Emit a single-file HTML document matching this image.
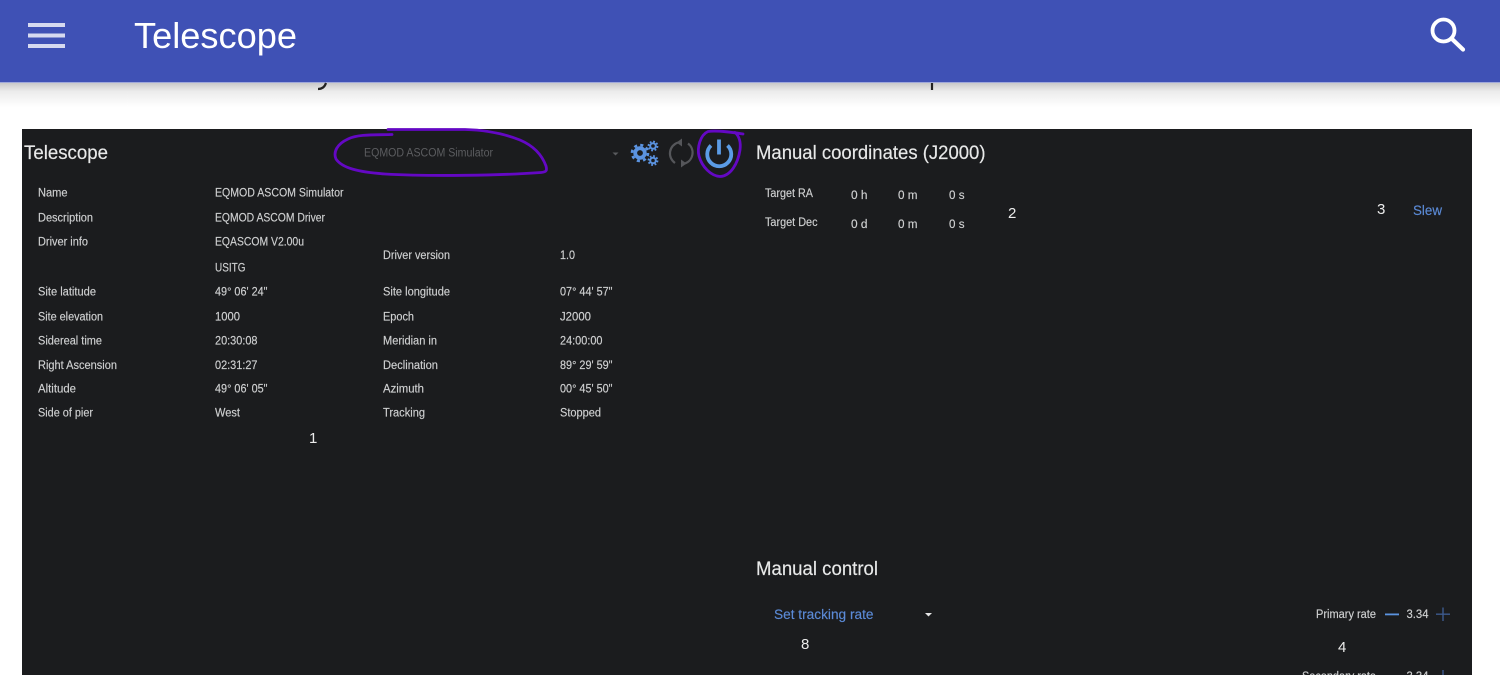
<!DOCTYPE html>
<html lang="en">
<head>
<meta charset="utf-8">
<title>Telescope</title>
<style>
html,body{margin:0;padding:0;background:#fff;width:1500px;height:675px;overflow:hidden}
svg{display:block;position:absolute;left:0;top:0;filter:blur(.35px)}
text{font-family:"Liberation Sans",sans-serif}
.s{font-size:11.5px;fill:#cfd0d1;stroke:#cfd0d1;stroke-width:.15px}
.h{font-size:19px;fill:#e8e9e9;stroke:#e8e9e9;stroke-width:.15px}
.n{font-size:15px;fill:#ececec}
.b{fill:#5b8ad6;stroke:#5b8ad6;stroke-width:.15px}
</style>
</head>
<body>
<svg width="1500" height="675" viewBox="0 0 1500 675" xmlns="http://www.w3.org/2000/svg">
<defs>
<linearGradient id="sh" x1="0" y1="0" x2="0" y2="1">
<stop offset="0" stop-color="#c9c9c9"/>
<stop offset=".35" stop-color="#ececec"/>
<stop offset="1" stop-color="#ffffff"/>
</linearGradient>
</defs>
<rect width="1500" height="675" fill="#fff"/>
<rect x="0" y="83" width="1500" height="24" fill="url(#sh)"/>
<path d="M326 83C325 86 323 89 318 89" fill="none" stroke="#222" stroke-width="2.200"/>
<path d="M932 83V90" fill="none" stroke="#222" stroke-width="2.200"/>
<rect x="0" y="0" width="1500" height="82.500" fill="#3f51b5"/>
<rect x="28" y="23" width="37" height="4" fill="#d6daf0"/>
<rect x="28" y="33.500" width="37" height="4" fill="#d6daf0"/>
<rect x="28" y="44" width="37" height="4" fill="#d6daf0"/>
<text x="134" y="48" font-size="36" fill="#fff" textLength="163" lengthAdjust="spacingAndGlyphs">Telescope</text>
<circle cx="1443.500" cy="30.500" r="11" fill="none" stroke="#fff" stroke-width="3.800"/>
<path d="M1451.500 38.500L1463 49.500" stroke="#fff" stroke-width="4.200" stroke-linecap="round"/>

<rect x="22" y="129" width="1450" height="546" fill="#1b1c1e"/>
<text x="24" y="159" class="h" textLength="84" lengthAdjust="spacingAndGlyphs">Telescope</text>
<text x="364" y="156.500" font-size="11.500" fill="#5c5d60" textLength="129" lengthAdjust="spacingAndGlyphs">EQMOD ASCOM Simulator</text>
<path d="M612.500 152.500h6l-3 3z" fill="#5a5b5e"/>

<g fill="none" stroke="#5b93e0">
<circle cx="640" cy="153" r="4.800" stroke-width="3.800"/>
<circle cx="640" cy="153" r="8" stroke-width="2.600" stroke-dasharray="3.100 3.180"/>
<circle cx="653" cy="146" r="2.800" stroke-width="2"/>
<circle cx="653" cy="146" r="4.500" stroke-width="1.800" stroke-dasharray="1.800 1.730"/>
<circle cx="653" cy="160.500" r="2.800" stroke-width="2"/>
<circle cx="653" cy="160.500" r="4.500" stroke-width="1.800" stroke-dasharray="1.800 1.730"/>
</g>
<g fill="none" stroke="#55565a" stroke-width="2.200">
<path d="M678 142.500A11.500 11.500 0 0 0 675 163"/>
<path d="M685 163.500A11.500 11.500 0 0 0 688 143.500"/>
</g>
<path d="M682 138.500v8l-5.500-4zM681 167.500v-8l5.500 4z" fill="#55565a"/>
<path d="M711 145.500A12 12 0 1 0 727.500 145.500" fill="none" stroke="#5b9ce6" stroke-width="3.800"/>
<path d="M719 139.500V154.500" stroke="#5b9ce6" stroke-width="3.800"/>

<g fill="none" stroke="#6408c4" stroke-width="2.800" stroke-linecap="round" stroke-linejoin="round">
<path d="M392 134.500C375 135 358 134 348 139C337 144 333 152 336 159C342 168 358 172 385 174C430 176.500 500 175.500 541 172.500C547 172 547 170 546 166C542 155 534 146 520 140C505 134 485 130 465 129.500L388 129.500"/>
<path d="M743 134C730 132 716 130 708 131.500C700 135 697 148 699 156C702 167 711 176 720 176.500C731 176 738 163 740 150C741 142 739 136 735 132.500"/>
</g>

<g>
<text class="s" x="38" y="196.500" textLength="29.500" lengthAdjust="spacingAndGlyphs">Name</text>
<text class="s" x="38" y="221.500" textLength="55" lengthAdjust="spacingAndGlyphs">Description</text>
<text class="s" x="38" y="245.500" textLength="50" lengthAdjust="spacingAndGlyphs">Driver info</text>
<text class="s" x="38" y="295.500" textLength="58" lengthAdjust="spacingAndGlyphs">Site latitude</text>
<text class="s" x="38" y="320.500" textLength="65" lengthAdjust="spacingAndGlyphs">Site elevation</text>
<text class="s" x="38" y="344.500" textLength="64" lengthAdjust="spacingAndGlyphs">Sidereal time</text>
<text class="s" x="38" y="369" textLength="79" lengthAdjust="spacingAndGlyphs">Right Ascension</text>
<text class="s" x="38" y="392.500" textLength="38" lengthAdjust="spacingAndGlyphs">Altitude</text>
<text class="s" x="38" y="416.500" textLength="55" lengthAdjust="spacingAndGlyphs">Side of pier</text>

<text class="s" x="215" y="196.500" textLength="128.500" lengthAdjust="spacingAndGlyphs">EQMOD ASCOM Simulator</text>
<text class="s" x="215" y="221.500" textLength="110" lengthAdjust="spacingAndGlyphs">EQMOD ASCOM Driver</text>
<text class="s" x="215" y="245.500" textLength="89" lengthAdjust="spacingAndGlyphs">EQASCOM V2.00u</text>
<text class="s" x="215" y="271.500" textLength="30.500" lengthAdjust="spacingAndGlyphs">USITG</text>
<text class="s" x="215" y="295.500" textLength="52.500" lengthAdjust="spacingAndGlyphs">49° 06' 24"</text>
<text class="s" x="215" y="320.500" textLength="25" lengthAdjust="spacingAndGlyphs">1000</text>
<text class="s" x="215" y="344.500" textLength="42.500" lengthAdjust="spacingAndGlyphs">20:30:08</text>
<text class="s" x="215" y="369" textLength="42.500" lengthAdjust="spacingAndGlyphs">02:31:27</text>
<text class="s" x="215" y="392.500" textLength="52.500" lengthAdjust="spacingAndGlyphs">49° 06' 05"</text>
<text class="s" x="215" y="416.500" textLength="25" lengthAdjust="spacingAndGlyphs">West</text>

<text class="s" x="383" y="259" textLength="67" lengthAdjust="spacingAndGlyphs">Driver version</text>
<text class="s" x="383" y="295.500" textLength="67" lengthAdjust="spacingAndGlyphs">Site longitude</text>
<text class="s" x="383" y="320.500" textLength="31" lengthAdjust="spacingAndGlyphs">Epoch</text>
<text class="s" x="383" y="344.500" textLength="54" lengthAdjust="spacingAndGlyphs">Meridian in</text>
<text class="s" x="383" y="369" textLength="55" lengthAdjust="spacingAndGlyphs">Declination</text>
<text class="s" x="383" y="392.500" textLength="41" lengthAdjust="spacingAndGlyphs">Azimuth</text>
<text class="s" x="383" y="416.500" textLength="42" lengthAdjust="spacingAndGlyphs">Tracking</text>

<text class="s" x="560" y="259" textLength="15" lengthAdjust="spacingAndGlyphs">1.0</text>
<text class="s" x="560" y="295.500" textLength="52.500" lengthAdjust="spacingAndGlyphs">07° 44' 57"</text>
<text class="s" x="560" y="320.500" textLength="31" lengthAdjust="spacingAndGlyphs">J2000</text>
<text class="s" x="560" y="344.500" textLength="42.500" lengthAdjust="spacingAndGlyphs">24:00:00</text>
<text class="s" x="560" y="369" textLength="52.500" lengthAdjust="spacingAndGlyphs">89° 29' 59"</text>
<text class="s" x="560" y="392.500" textLength="52.500" lengthAdjust="spacingAndGlyphs">00° 45' 50"</text>
<text class="s" x="560" y="416.500" textLength="41" lengthAdjust="spacingAndGlyphs">Stopped</text>
</g>
<text class="n" x="309" y="443">1</text>

<text class="h" x="756" y="159" textLength="229.500" lengthAdjust="spacingAndGlyphs">Manual coordinates (J2000)</text>
<text class="s" x="765" y="197" textLength="48" lengthAdjust="spacingAndGlyphs">Target RA</text>
<text class="s" x="765" y="226" textLength="52.500" lengthAdjust="spacingAndGlyphs">Target Dec</text>
<text class="s" x="851" y="199" textLength="16.500" lengthAdjust="spacingAndGlyphs">0 h</text>
<text class="s" x="898" y="199" textLength="19.500" lengthAdjust="spacingAndGlyphs">0 m</text>
<text class="s" x="949" y="199" textLength="15.500" lengthAdjust="spacingAndGlyphs">0 s</text>
<text class="s" x="851" y="228" textLength="16.500" lengthAdjust="spacingAndGlyphs">0 d</text>
<text class="s" x="898" y="228" textLength="19.500" lengthAdjust="spacingAndGlyphs">0 m</text>
<text class="s" x="949" y="228" textLength="15.500" lengthAdjust="spacingAndGlyphs">0 s</text>
<text class="n" x="1008" y="218">2</text>
<text class="n" x="1377" y="214">3</text>
<text class="b" x="1413" y="215" font-size="13.500" textLength="29" lengthAdjust="spacingAndGlyphs">Slew</text>

<text class="h" x="756" y="575" textLength="122" lengthAdjust="spacingAndGlyphs">Manual control</text>
<text class="b" x="774" y="619" font-size="13.500" textLength="99.500" lengthAdjust="spacingAndGlyphs">Set tracking rate</text>
<path d="M925 613h7l-3.500 3.500z" fill="#e6e6e6"/>
<text class="n" x="801" y="649">8</text>

<text class="s" x="1316" y="618" textLength="60" lengthAdjust="spacingAndGlyphs">Primary rate</text>
<rect x="1385" y="613.500" width="14" height="1.800" fill="#5b93e0"/>
<text class="s" x="1406.500" y="618" textLength="22" lengthAdjust="spacingAndGlyphs">3.34</text>
<path d="M1436 614.200H1450M1443 607.500V621" stroke="#3c5a8e" stroke-width="1.400" fill="none"/>
<text class="n" x="1338" y="652">4</text>

<text class="s" x="1302" y="680" textLength="74" lengthAdjust="spacingAndGlyphs">Secondary rate</text>
<text class="s" x="1406.500" y="680" textLength="22" lengthAdjust="spacingAndGlyphs">3.34</text>
<path d="M1443 670V675" stroke="#3c5a8e" stroke-width="1.400" fill="none"/>
</svg>
</body>
</html>
